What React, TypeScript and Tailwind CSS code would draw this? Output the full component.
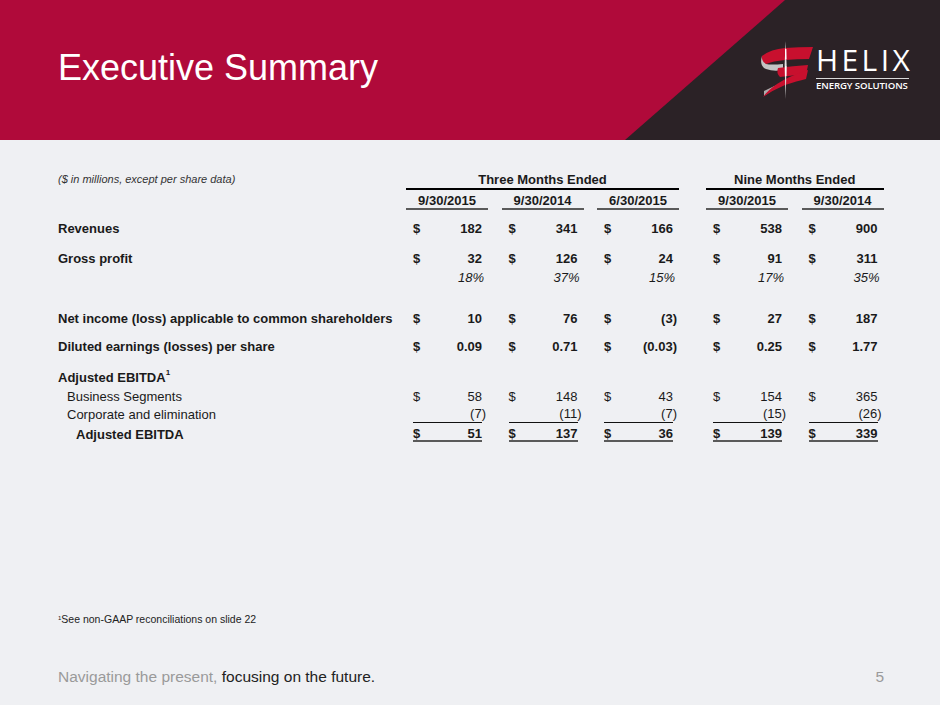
import React from "react";

type RowDef = {
  label: React.ReactNode;
  vals: string[];
  dollar?: boolean;
  bold?: boolean;
  italic?: boolean;
  line?: "single" | "double";
  labelClass?: string;
  h: string;
  mt: string;
};

function Val({ v, italic }: { v: string; italic?: boolean }) {
  const paren = v.endsWith(")");
  return (
    <span className={paren ? "-mr-[4px]" : italic ? "-mr-[2px]" : ""}>{v}</span>
  );
}

function DataCell({
  v,
  dollar,
  italic,
  line,
}: {
  v: string;
  dollar?: boolean;
  italic?: boolean;
  line?: "single" | "double";
}) {
  const border =
    line === "single"
      ? "border-b border-[#111]"
      : line === "double"
      ? "border-b-[2px] border-[#5a5a5a]"
      : "";
  return (
    <div className="w-[82px] h-full flex">
      <div className={`ml-[7px] w-[69px] h-full flex items-center justify-between ${border}`}>
        <span>{dollar ? "$" : ""}</span>
        <Val v={v} italic={italic} />
      </div>
    </div>
  );
}

function Row({ r }: { r: RowDef }) {
  const weight = r.bold ? "font-bold" : "font-normal";
  const style = r.italic ? "italic" : "";
  return (
    <div className={`flex items-center ${r.h} ${r.mt} ${weight} ${style}`}>
      <div className={`w-[348px] ${r.labelClass ?? ""}`}>{r.label}</div>
      <div className="flex h-full gap-[13.5px]">
        {r.vals.slice(0, 3).map((v, i) => (
          <DataCell key={i} v={v} dollar={r.dollar} italic={r.italic} line={r.line} />
        ))}
      </div>
      <div className="ml-[27px] flex h-full gap-[13.5px]">
        {r.vals.slice(3).map((v, i) => (
          <DataCell key={i} v={v} dollar={r.dollar} italic={r.italic} line={r.line} />
        ))}
      </div>
    </div>
  );
}

function HelixMark() {
  return (
    <svg width="56" height="58" viewBox="0 0 56 58" className="block">
      {/* gray under-ribbons */}
      <path d="M3 15 Q0 25 7 28 Q15 31 24 29 L24 23 Q12 24 7 23 Z" fill="#c4c4c4" />
      <path d="M5 55 Q18 45 40 38 L45 35 Q24 40 5 50 Z" fill="#adadad" />
      {/* top band */}
      <path d="M3 15 Q12 8 26 7 Q40 6 54 6 L50 18 Q38 18 26 19 Q14 20 7 23 Q2 20 3 15 Z" fill="#c8102e" />
      {/* middle band */}
      <path d="M19 27 Q34 25 49 24 L47 34 Q34 34 21 36 Q17 32 19 27 Z" fill="#c8102e" />
      {/* lower sweeping band */}
      <path d="M49 29 Q30 35 18 43 Q9 49 4 56 Q14 49 26 44 Q38 40 47 38 Z" fill="#c8102e" />
      {/* needle */}
      <path d="M26.6 0 L27.6 24 L26.6 58 L25.6 24 Z" fill="#e6e6e6" />
      <rect x="26" y="8" width="1.4" height="10" fill="#ffffff" />
      <rect x="26" y="25" width="1.4" height="10" fill="#ffffff" />
    </svg>
  );
}

export default function App() {
  const rows: RowDef[] = [
    { label: "Revenues", vals: ["182", "341", "166", "538", "900"], dollar: true, bold: true, h: "h-[20px]", mt: "mt-[8px]" },
    { label: "Gross profit", vals: ["32", "126", "24", "91", "311"], dollar: true, bold: true, h: "h-[20px]", mt: "mt-[10px]" },
    { label: "", vals: ["18%", "37%", "15%", "17%", "35%"], italic: true, h: "h-[18px]", mt: "mt-0" },
    { label: "Net income (loss) applicable to common shareholders", vals: ["10", "76", "(3)", "27", "187"], dollar: true, bold: true, h: "h-[20px]", mt: "mt-[22px]" },
    { label: "Diluted earnings (losses) per share", vals: ["0.09", "0.71", "(0.03)", "0.25", "1.77"], dollar: true, bold: true, h: "h-[20px]", mt: "mt-[8px]" },
    {
      label: (
        <span>
          Adjusted EBITDA<span className="text-[8px] align-top relative -top-[2px]">1</span>
        </span>
      ),
      vals: ["", "", "", "", ""],
      bold: true,
      h: "h-[20px]",
      mt: "mt-[11px]",
    },
    { label: "Business Segments", vals: ["58", "148", "43", "154", "365"], dollar: true, labelClass: "pl-[9px]", h: "h-[18px]", mt: "mt-0" },
    { label: "Corporate and elimination", vals: ["(7)", "(11)", "(7)", "(15)", "(26)"], labelClass: "pl-[9px]", line: "single", h: "h-[18px]", mt: "mt-0" },
    { label: "Adjusted EBITDA", vals: ["51", "137", "36", "139", "339"], dollar: true, bold: true, labelClass: "pl-[18px]", line: "double", h: "h-[16px]", mt: "mt-[3px]" },
  ];

  return (
    <div className="w-[940px] h-[705px] bg-[#eff0f3] font-['Liberation_Sans',Arial,Helvetica,sans-serif] text-[#1a1a1a] flex flex-col overflow-hidden">
      {/* header */}
      <div className="relative h-[140px] bg-[#b00a3a] shrink-0">
        <div className="absolute inset-0 bg-[#2b2226] [clip-path:polygon(785px_0,100%_0,100%_100%,625px_100%)]" />
        <div className="relative flex justify-between h-full">
          <h1 className="pl-[58px] pt-[50px] text-[36px] leading-none text-white font-normal">
            Executive Summary
          </h1>
          <div className="flex pt-[41px] pr-[30px]">
            <HelixMark />
            <div className="ml-[1px] flex flex-col w-[94px]">
              <div className="pt-[4px] text-[30px] leading-none text-white font-['Open_Sans',sans-serif] tracking-[3.4px]">
                HELIX
              </div>
              <div className="mt-[3px] h-px w-[93px] bg-[#d9d9d9]" />
              <div className="mt-[2px] text-[9.6px] leading-none text-white font-['Open_Sans',sans-serif] font-semibold tracking-[-0.1px] whitespace-nowrap">
                ENERGY SOLUTIONS
              </div>
            </div>
          </div>
        </div>
      </div>

      {/* table */}
      <div className="pl-[58px] text-[13px] leading-none">
        <div className="flex items-center h-[20px] mt-[30px]">
          <div className="w-[348px] text-[11px] italic text-[#333] self-start pt-[4px]">
            ($ in millions, except per share data)
          </div>
          <div className="w-[273px] h-full border-b-2 border-black font-bold text-center pt-[3px]">
            Three Months Ended
          </div>
          <div className="ml-[27px] w-[177.5px] h-full border-b-2 border-black font-bold text-center pt-[3px]">
            Nine Months Ended
          </div>
        </div>
        <div className="flex items-center h-[20px]">
          <div className="w-[348px]" />
          <div className="flex h-full gap-[13.5px]">
            {["9/30/2015", "9/30/2014", "6/30/2015"].map((d) => (
              <div key={d} className="w-[82px] h-full border-b-2 border-[#5a5a5a] font-bold text-center pt-[4px]">
                {d}
              </div>
            ))}
          </div>
          <div className="ml-[27px] flex h-full gap-[13.5px]">
            {["9/30/2015", "9/30/2014"].map((d) => (
              <div key={d} className="w-[82px] h-full border-b-2 border-[#5a5a5a] font-bold text-center pt-[4px]">
                {d}
              </div>
            ))}
          </div>
        </div>
        {rows.map((r, i) => (
          <Row key={i} r={r} />
        ))}
      </div>

      {/* footnote */}
      <div className="mt-auto pl-[58px] text-[10.5px] leading-none text-[#222]">
        <sup className="text-[6px]">1</sup>See non-GAAP reconciliations on slide 22
      </div>
      <div className="flex justify-between items-center pl-[58px] pr-[56px] mt-[44px] mb-[21px] text-[15.5px] leading-none">
        <div>
          <span className="text-[#9a9a9a]">Navigating the present, </span>
          <span className="text-[#222]">focusing on the future.</span>
        </div>
        <div className="text-[#9a9a9a]">5</div>
      </div>
    </div>
  );
}
